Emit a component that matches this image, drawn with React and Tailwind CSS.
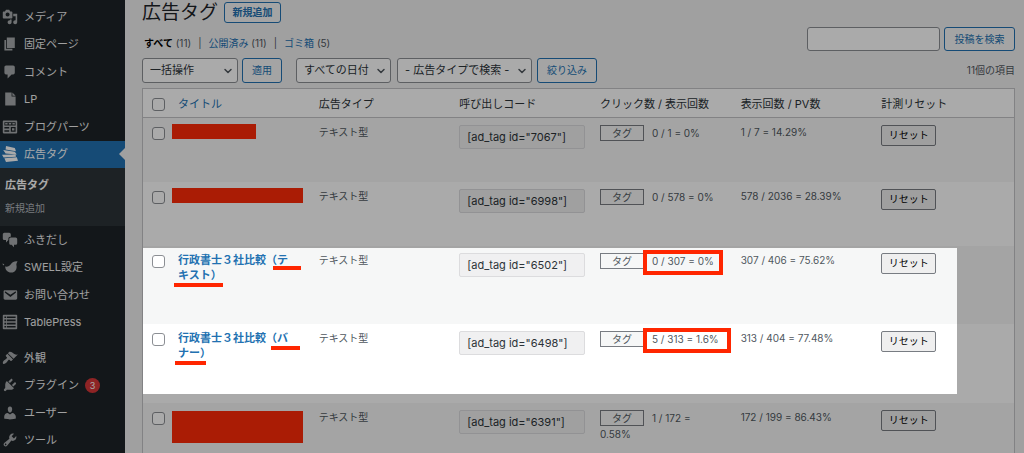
import React, { useState } from 'react';
import clsx from 'clsx';
import { ChevronDown } from 'lucide-react';

const ICONS = {
  media: 'M13 11V4c0-.55-.45-1-1-1h-1.67L9 1H5L3.67 3H2c-.55 0-1 .45-1 1v7c0 .55.45 1 1 1h10c.55 0 1-.45 1-1zM7 4.5c1.38 0 2.5 1.12 2.5 2.5S8.38 9.5 7 9.5 4.5 8.38 4.5 7 5.62 4.5 7 4.5zM14 6h5v10.5c0 1.38-1.12 2.5-2.5 2.5S14 17.88 14 16.5s1.12-2.5 2.5-2.5c.17 0 .34.02.5.05V9h-3V6zm-4 8.05V13h2v3.5c0 1.38-1.12 2.5-2.5 2.5S7 17.88 7 16.5 8.12 14 9.5 14c.17 0 .34.02.5.05z',
  page: 'M6 15V2h10v13H6zm-1 1h8v2H3V5h2v11z',
  comment: 'M5 2h9c1.1 0 2 .9 2 2v7c0 1.1-.9 2-2 2h-2l-5 5v-5H5c-1.1 0-2-.9-2-2V4c0-1.1.9-2 2-2z',
  file: 'M4 2h8v5h5v11H4V2zM13 2l4 4h-4V2z',
  blocks: 'M2 2h16c.6 0 1 .4 1 1v14c0 .6-.4 1-1 1H2c-.6 0-1-.4-1-1V3c0-.6.4-1 1-1zM3 4v4h14V4H3zm0 6v2h6v-2H3zm0 4v2h6v-2H3zm8-4v6h6v-6h-6zM4 5h3v2H4V5zm4.500 0h3v2h-3V5zM13 5h3v2h-3V5zM12.500 11.500h3v3h-3v-3z',
  tags: 'M5 0l11 2.500 1.500 4-13-2zM1.500 5l14.500 2.200 2.500 3.300-14-1zM0 10.800l17-.3.500 3-15.500 1zM3 15.300l15.500-1.300 1.500 4.500-15 1.500z',
  chat: 'M11 6h-.82C9.07 6 8 7.2 8 8.16V10l-3 3v-3H3c-1.1 0-2-.9-2-2V3c0-1.1.9-2 2-2h6c1.1 0 2 .9 2 2v3zm0 1h6c1.1 0 2 .9 2 2v5c0 1.1-.9 2-2 2h-2v3l-3-3h-1c-1.1 0-2-.9-2-2V9c0-1.1.9-2 2-2z',
  swell: 'M19.500 3c-3.500-.5-6.500.5-8 3-1.300 2.200-3.500 4-7.500 3.500 0 4.500 3 7.500 7.500 7.500 5 0 7.800-4.500 6.500-9.500-.3-1.500.5-3.200 1.500-4.500zM.5 5.500l2.500 1-1.500 1.500z',
  mail: 'M3.87 4h13.25C18.37 4 19 4.59 19 5.79v8.42c0 1.19-.63 1.79-1.88 1.79H3.87c-1.25 0-1.88-.6-1.88-1.79V5.79c0-1.2.63-1.79 1.88-1.79zm6.62 8.6l6.74-5.53c.24-.2.43-.66.13-1.07-.29-.41-.82-.42-1.17-.17l-5.7 3.86L4.8 5.83c-.35-.25-.88-.24-1.17.17-.3.41-.11.87.13 1.07z',
  table: 'M2 1h16c.55 0 1 .45 1 1v16c0 .55-.45 1-1 1H2c-.55 0-1-.45-1-1V2c0-.55.45-1 1-1zM3 3v2h2V3H3zm3 0v2h11V3H6zM3 7v2h2V7H3zm3 0v2h11V7H6zM3 11v2h2v-2H3zm3 0v2h11v-2H6zM3 15v2h2v-2H3zm3 0v2h11v-2H6z',
  brush: 'M14.48 11.06L7.41 3.99l1.5-1.5c.5-.56 2.3-.47 3.51.32 1.21.8 1.43 1.28 2.91 2.1 1.18.64 2.45 1.26 4.45.85zm-.71.71L6.7 4.7 4.93 6.47c-.39.39-.39 1.02 0 1.41l1.06 1.06c.39.39.39 1.03 0 1.42-.6.6-1.43 1.11-2.21 1.69-.35.26-.7.53-1.01.84C1.43 14.23.4 16.08 1.4 17.07c.99 1 2.84-.03 4.18-1.36.31-.31.58-.66.85-1.02.57-.78 1.08-1.61 1.69-2.21.39-.39 1.02-.39 1.41 0l1.06 1.06c.39.39 1.02.39 1.41 0z',
  plug: 'M13.11 4.36L9.87 7.6 8 5.73l3.24-3.24c.35-.34 1.05-.2 1.56.32.52.51.66 1.21.31 1.55zm-8 1.77l.91-1.12 9.01 9.01-1.19.84c-.71.71-2.63 1.16-3.82 1.16H6.14L4.9 17.26c-.59.59-1.54.59-2.12 0-.59-.58-.59-1.53 0-2.12l1.24-1.24v-3.88c0-1.13.4-3.19 1.09-3.89zm7.26 3.97l3.24-3.24c.34-.35 1.04-.21 1.55.31.52.51.66 1.21.31 1.55l-3.24 3.25z',
  user: 'M10 9.25c-2.27 0-2.73-3.44-2.73-3.44C7 4.02 7.82 2 9.97 2c2.16 0 2.98 2.02 2.71 3.81 0 0-.41 3.44-2.68 3.44zm0 2.57L12.72 10c2.39 0 4.52 2.33 4.52 4.53v2.49s-3.65 1.13-7.24 1.13c-3.65 0-7.24-1.13-7.24-1.13v-2.49c0-2.25 1.94-4.48 4.47-4.48z',
  wrench: 'M16.68 9.77c-1.34 1.34-3.3 1.67-4.95.99l-5.41 6.52c-.99.99-2.59.99-3.58 0s-.99-2.59 0-3.57l6.52-5.42c-.68-1.65-.35-3.61.99-4.95 1.28-1.28 3.12-1.62 4.72-1.06l-2.89 2.89 2.82 2.82 2.86-2.87c.53 1.58.18 3.39-1.08 4.65zM3.81 16.21c.4.39 1.04.39 1.43 0 .4-.4.4-1.04 0-1.43-.39-.4-1.03-.4-1.43 0-.39.39-.39 1.03 0 1.43z',
};

const contentMenu = [
  { icon: 'media', label: 'メディア' },
  { icon: 'page', label: '固定ページ' },
  { icon: 'comment', label: 'コメント' },
  { icon: 'file', label: 'LP' },
  { icon: 'blocks', label: 'ブログパーツ' },
  { icon: 'tags', label: '広告タグ', active: true },
];

const pluginMenu = [
  { icon: 'chat', label: 'ふきだし' },
  { icon: 'swell', label: 'SWELL設定' },
  { icon: 'mail', label: 'お問い合わせ' },
  { icon: 'table', label: 'TablePress' },
];

const systemMenu = [
  { icon: 'brush', label: '外観' },
  { icon: 'plug', label: 'プラグイン', count: 3 },
  { icon: 'user', label: 'ユーザー' },
  { icon: 'wrench', label: 'ツール' },
];

const rows = [
  { id: 7067, clicks: '0 / 1 = 0%', views: '1 / 7 = 14.29%', height: 'h-16', mask: 'w-[84px] h-[15px]' },
  { id: 6998, clicks: '0 / 578 = 0%', views: '578 / 2036 = 28.39%', height: 'h-16', mask: 'w-[131px] h-[15px]' },
  {
    id: 6502,
    title: '行政書士３社比較（テキスト）',
    clicks: '0 / 307 = 0%',
    views: '307 / 406 = 75.62%',
    height: 'h-[78px]',
    underlines: ['left-[103px] top-5 w-7', 'left-1 top-[37px] w-[49px]'],
    frame: 'w-20',
  },
  {
    id: 6498,
    title: '行政書士３社比較（バナー）',
    clicks: '5 / 313 = 1.6%',
    views: '313 / 404 = 77.48%',
    height: 'h-[79px]',
    underlines: ['left-[101px] top-[22px] w-[29px]', 'left-[5px] top-[37px] w-[31px]'],
    frame: 'w-[88px]',
  },
  { id: 6391, clicks: '1 / 172 = 0.58%', views: '172 / 199 = 86.43%', height: 'h-[78px]', mask: 'mt-0.5 w-[131px] h-8' },
];

const Icon = ({ name, className }) => (
  <svg viewBox="0 0 20 20" fill="currentColor" fillRule="evenodd" className={clsx('size-4 shrink-0', className)} aria-hidden="true">
    <path d={ICONS[name]} />
  </svg>
);

const Menu = ({ items, className }) => (
  <ul className={clsx('grid auto-rows-fr', className)}>
    {items.map((item) => (
      <li key={item.label} className={clsx('relative', item.active && 'bg-[#2271b1]')}>
        <a href="#" className={clsx('flex h-full items-center gap-1.5 pl-0.5', item.active ? 'text-white' : 'text-[#f0f0f1]')}>
          <Icon name={item.icon} className={item.active ? 'text-white' : 'text-[#a7aaad]'} />
          <span>{item.label}</span>
          {item.count && (
            <span className="flex size-[15px] items-center justify-center rounded-full bg-[#d63638] text-[9px] text-white">{item.count}</span>
          )}
        </a>
        {item.active && (
          <span className="absolute right-0 top-1/2 size-0 -translate-y-1/2 border-y-[6px] border-r-[6px] border-y-transparent border-r-[#f0f0f1]" />
        )}
      </li>
    ))}
  </ul>
);

const Sidebar = () => (
  <nav className="w-[125px] shrink-0 bg-[#1d2327] pt-[3px] text-[11px]">
    <Menu items={contentMenu} className="h-[165px]" />
    <ul className="h-[58px] bg-[#2c3338] pl-[5px] pt-1.5 leading-[23px]">
      <li><a href="#" className="font-bold text-white">広告タグ</a></li>
      <li><a href="#" className="text-[10px] text-[#b4b9be]">新規追加</a></li>
    </ul>
    <Menu items={pluginMenu} className="h-[110px]" />
    <Menu items={systemMenu} className="mt-2 h-[110px]" />
  </nav>
);

const Button = ({ children, className }) => (
  <button type="button" className={clsx('shrink-0 rounded-[3px] border border-[#2271b1] bg-[#f6f7f7] text-[#2271b1]', className)}>
    {children}
  </button>
);

const Select = ({ label, className }) => (
  <div className={clsx('relative', className)}>
    <select aria-label={label} className="h-[25px] w-full appearance-none rounded-[3px] border border-[#8c8f94] bg-white pl-[7px] text-[11px] text-[#2c3338]">
      <option>{label}</option>
    </select>
    <ChevronDown className="pointer-events-none absolute right-1 top-[7px] size-3 text-[#50575e]" strokeWidth={3} />
  </div>
);

const Checkbox = ({ label, ...props }) => (
  <input
    type="checkbox"
    aria-label={label}
    className="block size-[13px] appearance-none rounded-[3px] border border-[#8c8f94] bg-white checked:bg-[#2271b1]"
    {...props}
  />
);

const AdTable = () => {
  const [selected, setSelected] = useState([]);

  const toggle = (id) => {
    setSelected(selected.includes(id) ? selected.filter((s) => s !== id) : [...selected, id]);
  };

  return (
    <table className="mt-[5px] w-full table-fixed border-separate border-spacing-0 border border-[#c3c4c7] bg-white text-left text-[10px] leading-[15px] text-[#50575e]">
      <thead>
        <tr className="h-[29px] text-[11px] text-[#2c3338] *:border-b *:border-[#c3c4c7] *:pt-0.5 *:font-normal">
          <th className="w-[27px] pl-[9px]">
            <Checkbox
              label="すべて選択"
              checked={selected.length === rows.length}
              onChange={(e) => setSelected(e.target.checked ? rows.map((r) => r.id) : [])}
            />
          </th>
          <th className="pl-2"><a href="#" className="text-[#2271b1]">タイトル</a></th>
          <th className="pl-2">広告タイプ</th>
          <th className="pl-2">呼び出しコード</th>
          <th className="pl-2">クリック数 / 表示回数</th>
          <th className="pl-2">表示回数 / PV数</th>
          <th className="pl-2">計測リセット</th>
        </tr>
      </thead>
      <tbody>
        {rows.map((row) => (
          <tr key={row.id} className={clsx('align-top odd:bg-[#f6f7f7]', row.height)}>
            <td className="pl-[9px] pt-[9px]">
              <Checkbox label={`${row.id}を選択`} checked={selected.includes(row.id)} onChange={() => toggle(row.id)} />
            </td>
            <td className={clsx('relative text-[11px]', row.title ? 'pl-2 pr-4 pt-[7px]' : 'pl-0.5 pt-[6px]')}>
              {row.title ? (
                <a href="#" className="font-bold text-[#2271b1]">{row.title}</a>
              ) : (
                <div className={clsx('bg-[#ff2a08]', row.mask)} />
              )}
              {row.underlines?.map((line) => (
                <span key={line} className={clsx('absolute h-1 bg-[#ff2600]', line)} />
              ))}
            </td>
            <td className="pl-2 pt-[7px]">テキスト型</td>
            <td className="pl-2 pr-[7px] pt-[7px]">
              <input
                readOnly
                aria-label="呼び出しコード"
                value={`[ad_tag id="${row.id}"]`}
                className="block h-6 w-full rounded-[2px] border border-[#dcdcde] bg-[#f0f0f1] px-[7px] text-[11px] text-[#2c3338]"
              />
            </td>
            <td className="relative pl-2 pr-3 pt-[7px] leading-4">
              <span className="mr-2 inline-block h-4 w-11 border border-[#787c82] bg-[#f6f7f7] text-center align-top leading-[14px]">タグ</span>
              {row.clicks}
              {row.frame && <span className={clsx('absolute left-[51px] top-1 h-[25px] border-4 border-[#ff2600]', row.frame)} />}
            </td>
            <td className="pl-2 pt-[7px]">{row.views}</td>
            <td className="pl-2 pt-[7px]">
              <button type="button" className="block h-[21px] w-[55px] rounded-[2px] border border-[#787c82] bg-[#efefef] text-black">リセット</button>
            </td>
          </tr>
        ))}
      </tbody>
    </table>
  );
};

export default function App() {
  return (
    <div className="relative flex h-screen overflow-hidden bg-[#f0f0f1] font-['Inter','Noto_Sans_CJK_JP',sans-serif] text-[10px] text-[#50575e]">
      <Sidebar />
      <main className="min-w-0 flex-1 pl-[17px] pr-[9px]">
        <div className="flex h-[27px] items-start gap-1.5">
          <h1 className="text-[19px] leading-[26px] text-[#1d2327]">広告タグ</h1>
          <Button className="mt-0.5 h-[21px] w-[57px] font-bold">新規追加</Button>
        </div>

        <div className="flex items-center justify-between">
          <ul className="flex gap-[7px] pl-0.5 pt-2">
            <li><a href="#" className="font-bold text-black">すべて</a> (11)</li>
            <li>|</li>
            <li><a href="#" className="text-[#2271b1]">公開済み</a> (11)</li>
            <li>|</li>
            <li><a href="#" className="text-[#2271b1]">ゴミ箱</a> (5)</li>
          </ul>
          <form className="flex gap-1" onSubmit={(e) => e.preventDefault()}>
            <input type="search" aria-label="投稿を検索" className="h-6 w-[133px] rounded-[3px] border border-[#8c8f94] bg-white px-2" />
            <Button className="h-6 w-[71px]">投稿を検索</Button>
          </form>
        </div>

        <div className="mt-[7px] flex items-center">
          <Select label="一括操作" className="w-24" />
          <Button className="ml-1 h-[25px] w-10">適用</Button>
          <Select label="すべての日付" className="ml-3.5 w-[95px]" />
          <Select label="- 広告タイプで検索 -" className="ml-1.5 w-[135px]" />
          <Button className="ml-[5px] h-[25px] w-[60px]">絞り込み</Button>
          <span className="ml-auto">11個の項目</span>
        </div>

        <AdTable />
      </main>

      {/* dims everything except the two highlighted rows */}
      <div className="pointer-events-none absolute left-[143px] right-[67px] top-[248px] h-[146px] shadow-[0_0_0_2000px_rgba(0,0,0,0.335)]" />
    </div>
  );
}
